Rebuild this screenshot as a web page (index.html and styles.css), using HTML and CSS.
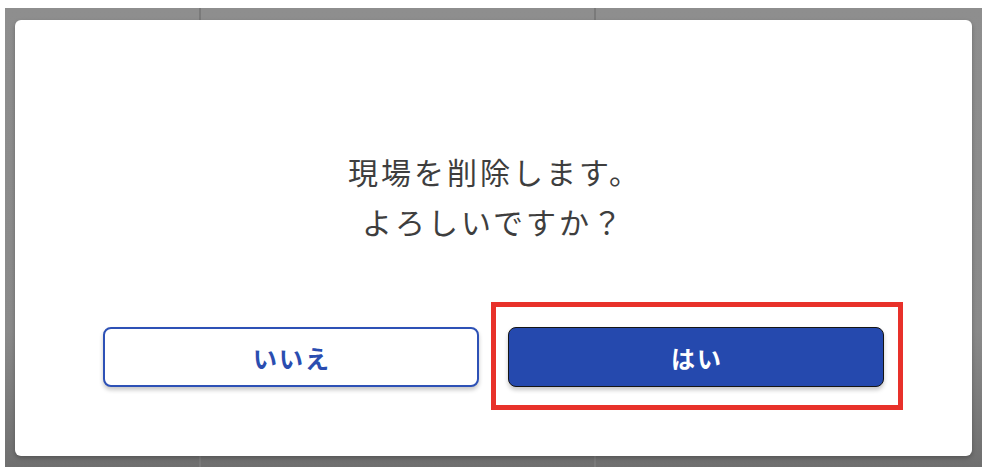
FILE: index.html
```html
<!DOCTYPE html>
<html lang="ja">
<head>
<meta charset="utf-8">
<link rel="stylesheet" href="styles.css">
</head>
<body>
<div class="backdrop">
  <div class="dialog">
    <p class="message">現場を削除します。<br>よろしいですか？</p>
    <div class="actions">
      <button class="btn btn-no">いいえ</button>
      <span class="highlight"><button class="btn btn-yes">はい</button></span>
    </div>
  </div>
</div>
</body>
</html>
```
FILE: styles.css
```css
html, body {
  margin: 0;
  padding: 0;
  background: #ffffff;
}
body {
  width: 990px;
  height: 476px;
  overflow: hidden;
  font-family: "Noto Sans CJK JP", "Noto Sans", sans-serif;
}
.backdrop {
  margin: 8px 8px 9px 5px;
  height: 459px;
  box-sizing: border-box;
  padding: 12px 10px 11px 10px;
  background:
    linear-gradient(to right, transparent 194px, #7a7a7a 194px, #7a7a7a 196px, transparent 196px, transparent 589px, #7a7a7a 589px, #7a7a7a 591px, transparent 591px),
    linear-gradient(to bottom, #8e8e8e 0%, #8a8a8a 70%, #6f6f6f 100%);
}
.dialog {
  height: 100%;
  box-sizing: border-box;
  background: #ffffff;
  border-radius: 6px;
  padding-top: 126px;
  display: flex;
  flex-direction: column;
  align-items: center;
  box-shadow: 0 2px 4px rgba(0,0,0,0.25);
}
.message {
  margin: 0;
  font-size: 30px;
  line-height: 50px;
  letter-spacing: 3px;
  text-indent: 3px;
  color: #3e3e3e;
  text-align: center;
}
.actions {
  margin-top: 81px;
  display: flex;
  gap: 29px;
}
.btn {
  width: 376px;
  height: 60px;
  box-sizing: border-box;
  border-radius: 8px;
  font-family: "Noto Sans CJK JP", "Noto Sans", sans-serif;
  font-size: 24px;
  font-weight: 700;
  letter-spacing: 2px;
  text-indent: 2px;
  display: flex;
  align-items: center;
  justify-content: center;
  padding: 0;
  box-shadow: 0 3px 4px rgba(0,0,0,0.22);
}
.btn-no {
  background: #ffffff;
  border: 2px solid #2d51b6;
  color: #2a4db0;
}
.btn-yes {
  background: #2549ae;
  border: 1.5px solid #151515;
  color: #ffffff;
}
.highlight {
  position: relative;
  display: block;
}
.highlight::after {
  content: "";
  position: absolute;
  left: -17px;
  right: -19px;
  top: -25px;
  bottom: -23px;
  border: 5px solid #e8312a;
  pointer-events: none;
}
```
